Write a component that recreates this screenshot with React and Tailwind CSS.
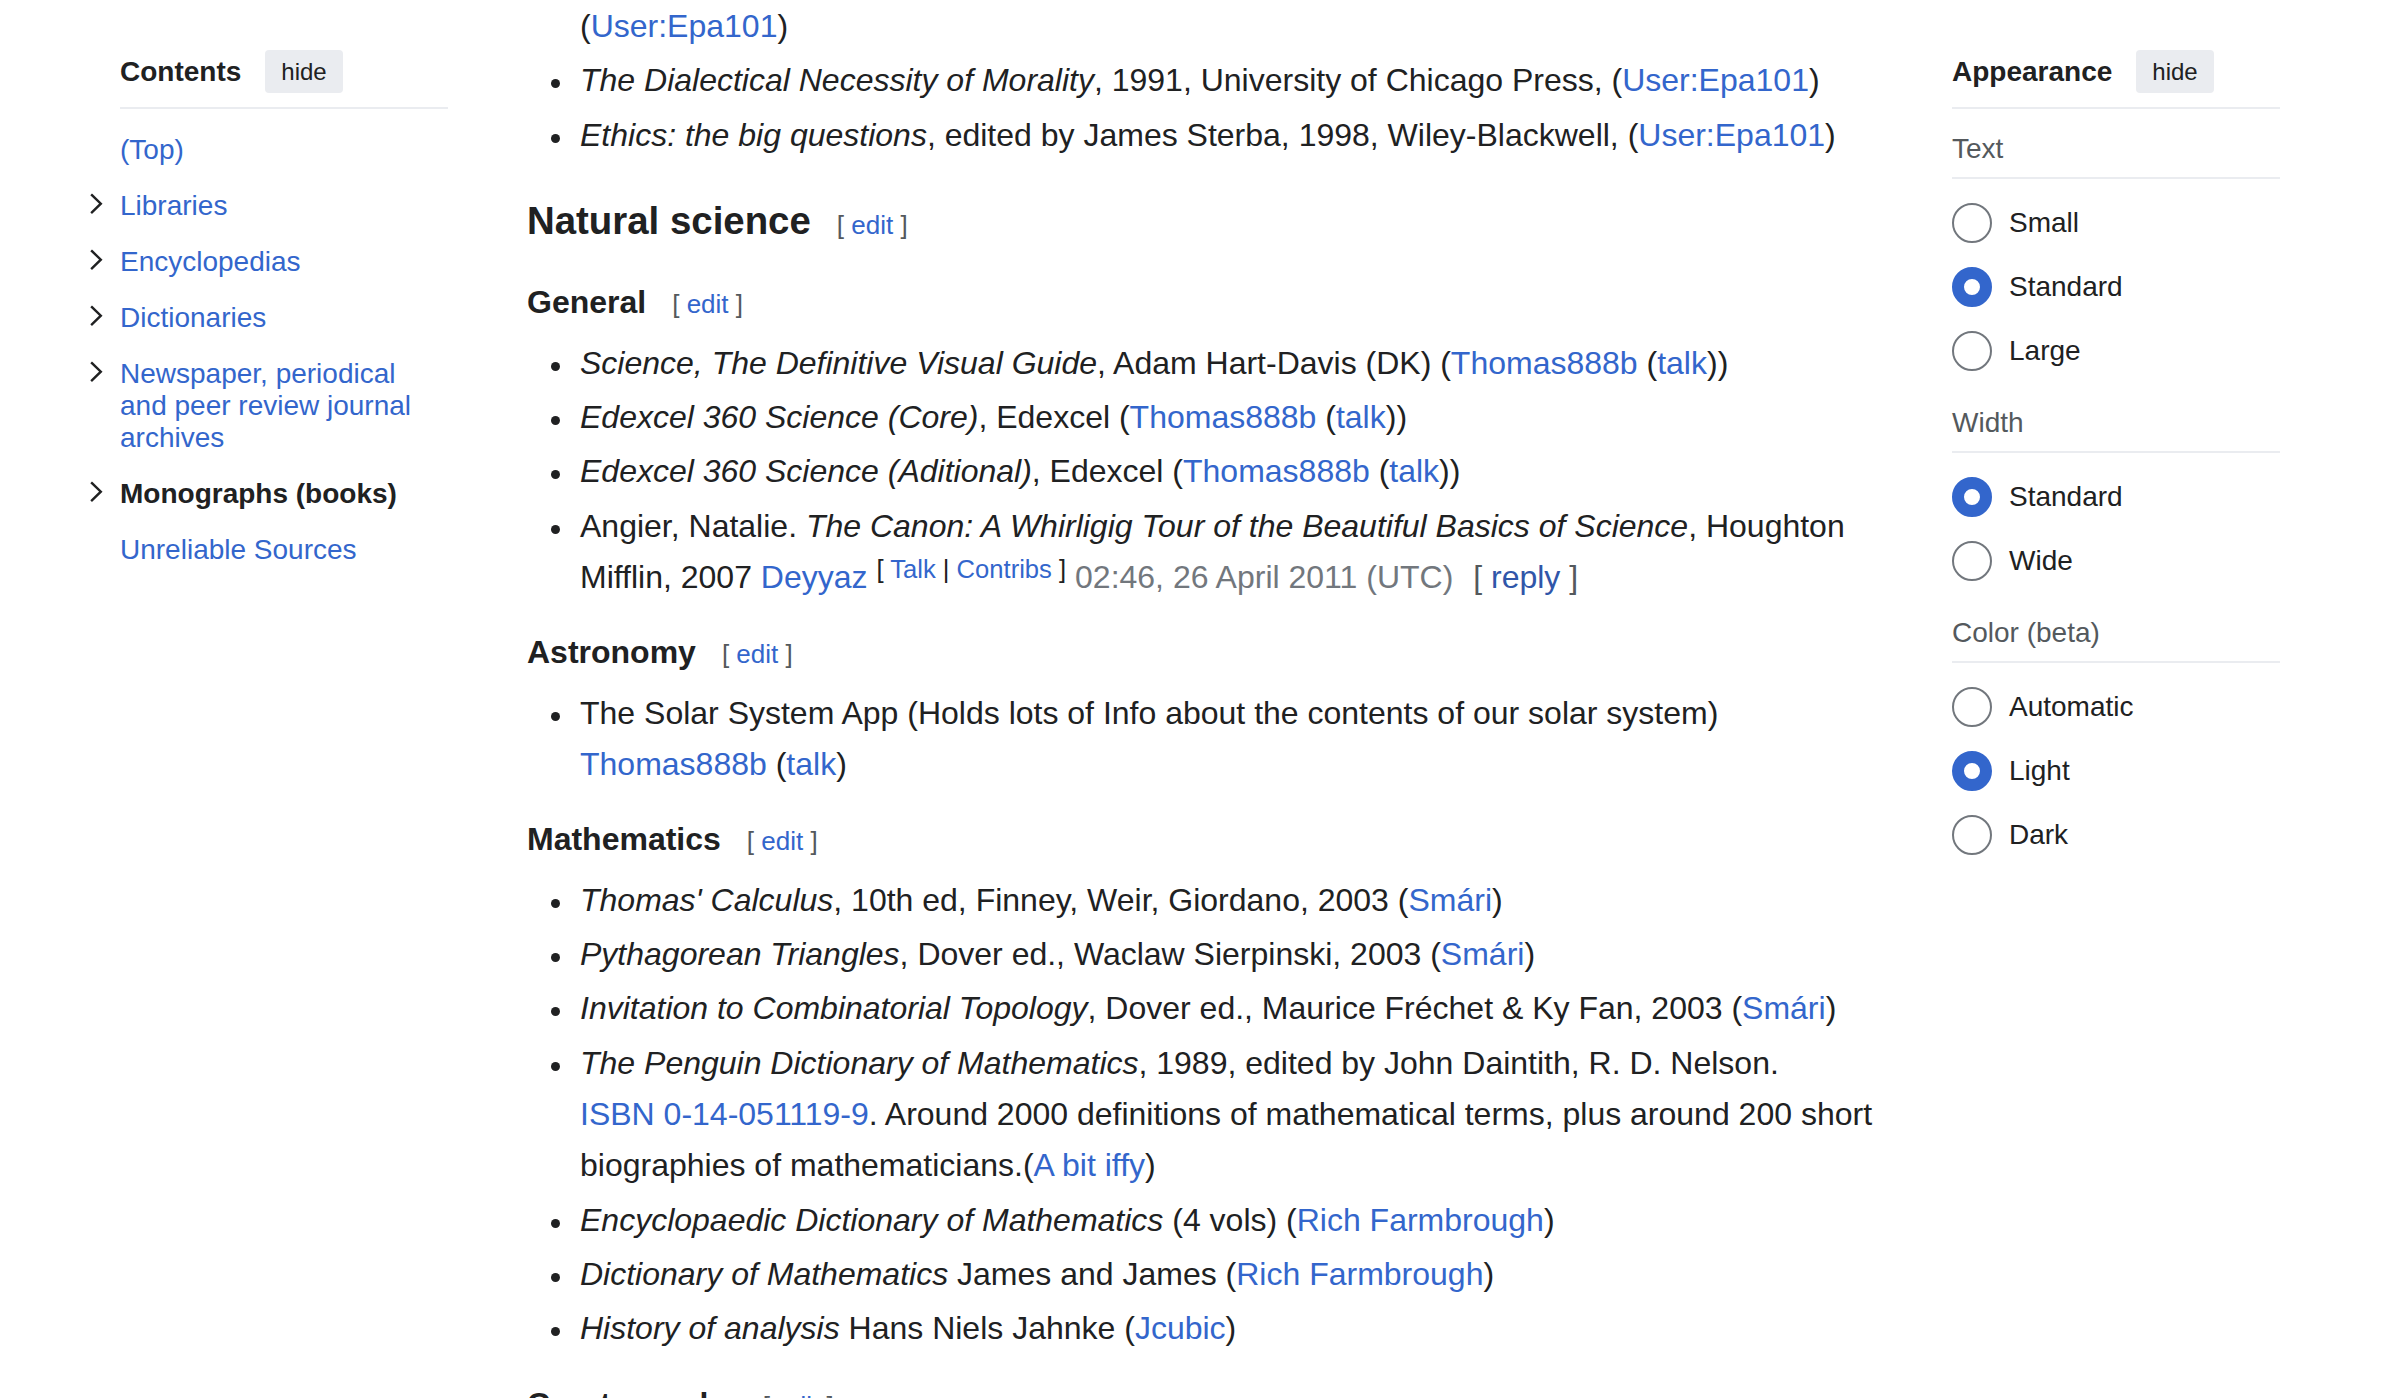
import React from 'react';

const LINK = 'text-[#36c]';

const Chevron = () => (
  <svg width="37" height="32" viewBox="0 0 37 32" fill="none">
    <path d="M9 5.2 L17.8 13.7 L9 22.2" stroke="#202122" strokeWidth="2.4" strokeLinecap="square" />
  </svg>
);

const HideButton = () => (
  <button className="h-[43px] px-[16px] rounded-[4px] bg-[#eaecf0] text-[24px] text-[#202122] flex items-center">
    hide
  </button>
);

const PanelHeader = ({ title }) => (
  <div className="flex items-center gap-[24px] pb-[14px] border-b-2 border-[#eaecf0]">
    <h2 className="text-[28px] leading-[32px] font-bold text-[#202122]">{title}</h2>
    <HideButton />
  </div>
);

const toc = [
  { label: '(Top)', chev: false },
  { label: 'Libraries', chev: true },
  { label: 'Encyclopedias', chev: true },
  { label: 'Dictionaries', chev: true },
  { label: 'Newspaper, periodical and peer review journal archives', chev: true },
  { label: 'Monographs (books)', chev: true, active: true },
  { label: 'Unreliable Sources', chev: false },
];

const Radio = ({ label, checked }) => (
  <div className="h-[64px] flex items-center gap-[17px]">
    <span
      className={
        checked
          ? 'w-[40px] h-[40px] rounded-full bg-white border-[12px] border-[#36c]'
          : 'w-[40px] h-[40px] rounded-full bg-white border-2 border-[#72777d]'
      }
    />
    <span className="text-[28px] leading-[32px] text-[#202122]">{label}</span>
  </div>
);

const Group = ({ label, options, value }) => (
  <div>
    <div className="pt-[24px] pb-[12px] border-b-2 border-[#eaecf0] text-[28px] leading-[32px] text-[#54595d]">
      {label}
    </div>
    <div className="pt-[12px]">
      {options.map((o) => (
        <Radio key={o} label={o} checked={o === value} />
      ))}
    </div>
  </div>
);

const Edit = () => (
  <span className="ml-[26px] text-[26px] leading-none font-normal text-[#54595d]">
    [ <span className={LINK}>edit</span> ]
  </span>
);

const H3 = ({ children, className = '' }) => (
  <h3 className={`text-[38.4px] leading-[61.44px] font-bold text-[#202122] ${className}`}>
    {children}
    <Edit />
  </h3>
);

const H4 = ({ children, className = '' }) => (
  <h4 className={`text-[32px] leading-[51.2px] font-bold text-[#202122] ${className}`}>
    {children}
    <Edit />
  </h4>
);

const Li = ({ children, bullet = true }) => (
  <li className="flex mb-[3.2px]">
    <span className="w-[53px] shrink-0 flex items-start">
      {bullet && <span className="mt-[24px] ml-[24px] w-[9px] h-[9px] rounded-full bg-[#202122]" />}
    </span>
    <div className="w-[1310px] leading-[51.2px]">{children}</div>
  </li>
);

const A = ({ children }) => <a className={LINK}>{children}</a>;

const App = () => {
  return (
    <div className="w-[2400px] h-[1398px] overflow-hidden bg-white flex pl-[120px] font-['Liberation_Sans',Arial,sans-serif] text-[#202122]">
      {/* Contents sidebar */}
      <div className="w-[328px] shrink-0 pt-[50px]">
        <PanelHeader title="Contents" />
        <ul className="pt-[13px] -ml-[37px]">
          {toc.map((item) => (
            <li key={item.label} className="flex py-[12px]">
              <span className="w-[37px] h-[32px] shrink-0">{item.chev && <Chevron />}</span>
              <a
                className={`w-[327px] text-[28px] leading-[32px] ${
                  item.active ? 'font-bold text-[#202122]' : 'text-[#36c]'
                }`}
              >
                {item.label}
              </a>
            </li>
          ))}
        </ul>
      </div>

      {/* Main article */}
      <div className="w-[1363px] shrink-0 ml-[79px] pt-[1px] flex flex-col text-[32px]">
        <ul className="flex flex-col">
          <Li bullet={false}>
            (<A>User:Epa101</A>)
          </Li>
          <Li>
            <i>The Dialectical Necessity of Morality</i>, 1991, University of Chicago Press, (<A>User:Epa101</A>)
          </Li>
          <Li>
            <i>Ethics: the big questions</i>, edited by James Sterba, 1998, Wiley-Blackwell, (<A>User:Epa101</A>)
          </Li>
        </ul>

        <H3 className="mt-[25.8px]">Natural science</H3>
        <H4 className="mt-[25.9px]">General</H4>
        <ul className="flex flex-col mt-[9px]">
          <Li>
            <i>Science, The Definitive Visual Guide</i>, Adam Hart-Davis (DK) (<A>Thomas888b</A> (<A>talk</A>))
          </Li>
          <Li>
            <i>Edexcel 360 Science (Core)</i>, Edexcel (<A>Thomas888b</A> (<A>talk</A>))
          </Li>
          <Li>
            <i>Edexcel 360 Science (Aditional)</i>, Edexcel (<A>Thomas888b</A> (<A>talk</A>))
          </Li>
          <Li>
            Angier, Natalie. <i>The Canon: A Whirligig Tour of the Beautiful Basics of Science</i>, Houghton Mifflin, 2007{' '}
            <A>Deyyaz</A>{' '}
            <sup className="text-[25.6px] top-[-10px] leading-none">
              [ <A>Talk</A> | <A>Contribs</A> ]
            </sup>{' '}
            <span className="text-[#72777d]">02:46, 26 April 2011 (UTC)</span>{' '}
            <span className="ml-[11px] text-[#54595d]">
              [ <span className="text-[#3056a9]">reply</span> ]
            </span>
          </Li>
        </ul>

        <H4 className="mt-[21.2px]">Astronomy</H4>
        <ul className="flex flex-col mt-[9px]">
          <Li>
            The Solar System App (Holds lots of Info about the contents of our solar system) <A>Thomas888b</A> (<A>talk</A>)
          </Li>
        </ul>

        <H4 className="mt-[21.2px]">Mathematics</H4>
        <ul className="flex flex-col mt-[9px]">
          <Li>
            <i>Thomas' Calculus</i>, 10th ed, Finney, Weir, Giordano, 2003 (<A>Smári</A>)
          </Li>
          <Li>
            <i>Pythagorean Triangles</i>, Dover ed., Waclaw Sierpinski, 2003 (<A>Smári</A>)
          </Li>
          <Li>
            <i>Invitation to Combinatorial Topology</i>, Dover ed., Maurice Fréchet &amp; Ky Fan, 2003 (<A>Smári</A>)
          </Li>
          <Li>
            <i>The Penguin Dictionary of Mathematics</i>, 1989, edited by John Daintith, R. D. Nelson.{' '}
            <A>ISBN&nbsp;0-14-051119-9</A>. Around 2000 definitions of mathematical terms, plus around 200 short biographies of mathematicians.(<A>A bit iffy</A>)
          </Li>
          <Li>
            <i>Encyclopaedic Dictionary of Mathematics</i> (4 vols) (<A>Rich Farmbrough</A>)
          </Li>
          <Li>
            <i>Dictionary of Mathematics</i> James and James (<A>Rich Farmbrough</A>)
          </Li>
          <Li>
            <i>History of analysis</i> Hans Niels Jahnke (<A>Jcubic</A>)
          </Li>
        </ul>

        <H4 className="mt-[21.2px]">Cryptography</H4>
      </div>

      {/* Appearance sidebar */}
      <div className="w-[328px] shrink-0 ml-[62px] pt-[50px]">
        <PanelHeader title="Appearance" />
        <Group label="Text" options={['Small', 'Standard', 'Large']} value="Standard" />
        <Group label="Width" options={['Standard', 'Wide']} value="Standard" />
        <Group label="Color (beta)" options={['Automatic', 'Light', 'Dark']} value="Light" />
      </div>
    </div>
  );
};

export default App;
